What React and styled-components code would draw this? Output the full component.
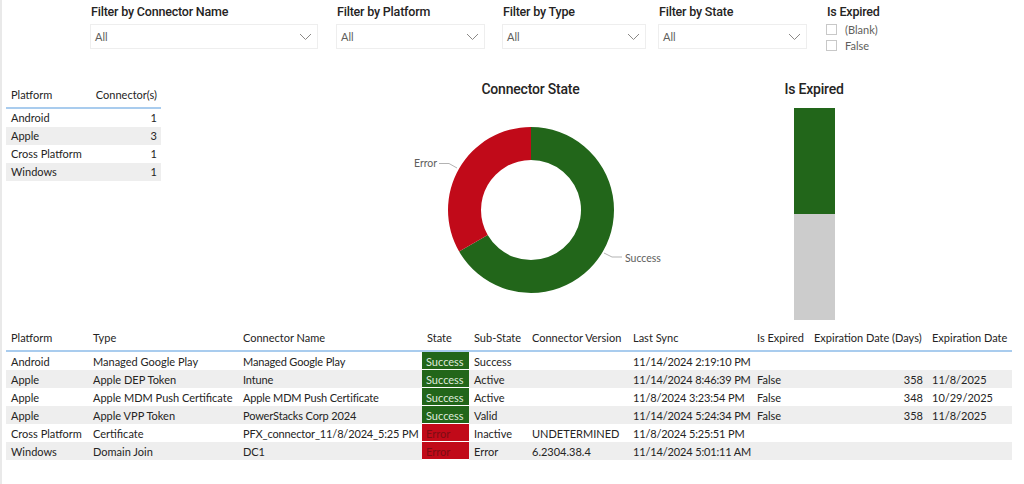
import styled, { createGlobalStyle } from "styled-components";

const GlobalStyle = createGlobalStyle`
  html, body {
    margin: 0;
    padding: 0;
    background: #ffffff;
  }
  body {
    font-family: "Lato", "Liberation Sans", sans-serif;
    color: #252423;
  }
`

const Page = styled.div`
  width: 1024px;
  height: 484px;
  box-sizing: border-box;
  border-left: 2px solid #e9e9e9;
  display: flex;
  flex-direction: column;
  overflow: hidden;
`

const FilterRow = styled.div`
  display: flex;
  height: 60px;
  padding-left: 88px;
  box-sizing: border-box;
`

const Slicer = styled.div`
  width: ${p => p.$width}px;
  margin-right: ${p => p.$space || 0}px;
  display: flex;
  flex-direction: column;
`

const SlicerTitle = styled.div`
  font-family: "Roboto", "Liberation Sans", sans-serif;
  font-weight: 500;
  font-size: 12.5px;
  color: #252423;
  height: 20px;
  line-height: 20px;
  margin-top: 2px;
  padding-left: 1px;
  letter-spacing: -0.2px;
  white-space: nowrap;
`

const Dropdown = styled.div`
  height: 23px;
  margin-top: 2px;
  border: 1px solid #eeeeee;
  display: flex;
  align-items: center;
  justify-content: space-between;
  padding: 0 5px 0 4px;
  font-size: 11px;
  color: #605e5c;
`

const CheckList = styled.div`
  display: flex;
  flex-direction: column;
  gap: 4px;
  margin-top: 1px;
`

const CheckItem = styled.div`
  display: flex;
  align-items: center;
  gap: 8px;
  font-size: 11px;
  color: #605e5c;
  height: 12px;
`

const CheckBox = styled.span`
  width: 9px;
  height: 9px;
  border: 1px solid #c8c8c8;
  display: inline-block;
`

const MiddleRow = styled.div`
  display: flex;
  height: 265px;
`

const SmallTable = styled.div`
  width: 155px;
  margin-left: 4px;
  margin-top: 24px;
  font-size: 11px;
`

const SmallHead = styled.div`
  display: flex;
  justify-content: space-between;
  height: 23px;
  line-height: 21px;
  padding: 0 4px 0 5px;
  border-bottom: 2px solid #a9ccee;
  color: #252423;
`

const SmallRow = styled.div`
  display: flex;
  justify-content: space-between;
  height: 18px;
  line-height: 18px;
  padding: 0 4px 0 5px;
  background: ${p => (p.$alt ? "#eeeeee" : "transparent")};
`

const Visual = styled.div`
  width: ${p => p.$width}px;
  margin-left: ${p => p.$offset}px;
  margin-top: 19px;
  display: flex;
  flex-direction: column;
  align-items: center;
`

const VisualTitle = styled.div`
  font-family: "Roboto", "Liberation Sans", sans-serif;
  font-weight: 500;
  font-size: 14px;
  letter-spacing: -0.2px;
  color: #252423;
  height: 20px;
  line-height: 20px;
`

const Bar = styled.div`
  width: 41px;
  margin-top: 9px;
  display: flex;
  flex-direction: column;
`

const BarPart = styled.div`
  height: ${p => p.$h}px;
  background: ${p => p.$color};
`

const TableWrap = styled.div`
  padding-left: 4px;
`

const Table = styled.table`
  border-collapse: collapse;
  table-layout: fixed;
  width: 1006px;
  font-size: 11px;
`

const HeadCell = styled.th`
  font-weight: 400;
  text-align: left;
  height: 25px;
  padding: 0 0 0 5px;
  border-bottom: 2px solid #a9ccee;
  color: #252423;
  white-space: nowrap;
  overflow: hidden;
`

const Row = styled.tr`
  background: ${p => (p.$alt ? "#eeeeee" : "transparent")};
`

const Cell = styled.td`
  height: 18px;
  padding: 0 ${p => (p.$right ? "4px" : "0")} 0 5px;
  text-align: ${p => (p.$right ? "right" : "left")};
  white-space: nowrap;
  overflow: hidden;
  color: #252423;
  letter-spacing: ${p => (p.$tight ? "-0.15px" : "0")};
`

const StateCell = styled.td`
  height: 18px;
  padding: 0 0 0 4px;
  white-space: nowrap;
  overflow: hidden;
  background: ${p => (p.$ok ? "#22661a" : "#c10a19")};
  color: ${p => (p.$ok ? "#dfe9dc" : "#7d0d14")};
  box-shadow: inset 0 -1px 0 #ffffff;
`

const Chevron = () => (
  <svg width="13" height="8" viewBox="0 0 13 8">
    <path d="M1 1 L6.5 6.5 L12 1" fill="none" stroke="#8a8886" strokeWidth="1" />
  </svg>
)

const filters = [
  { title: "Filter by Connector Name", width: 228, space: 18 },
  { title: "Filter by Platform", width: 149, space: 17 },
  { title: "Filter by Type", width: 144, space: 12 },
  { title: "Filter by State", width: 149, space: 19 },
]

const platforms = [
  ["Android", 1],
  ["Apple", 3],
  ["Cross Platform", 1],
  ["Windows", 1],
]

const cols = [
  ["Platform", 82],
  ["Type", 150],
  ["Connector Name", 184],
  ["State", 47],
  ["Sub-State", 58],
  ["Connector Version", 101],
  ["Last Sync", 124],
  ["Is Expired", 57],
  ["Expiration Date (Days)", 118],
  ["Expiration Date", 85],
]

const connectors = [
  ["Android", "Managed Google Play", "Managed Google Play", "Success", "Success", "", "11/14/2024 2:19:10 PM", "", "", ""],
  ["Apple", "Apple DEP Token", "Intune", "Success", "Active", "", "11/14/2024 8:46:39 PM", "False", "358", "11/8/2025"],
  ["Apple", "Apple MDM Push Certificate", "Apple MDM Push Certificate", "Success", "Active", "", "11/8/2024 3:23:54 PM", "False", "348", "10/29/2025"],
  ["Apple", "Apple VPP Token", "PowerStacks Corp 2024", "Success", "Valid", "", "11/14/2024 5:24:34 PM", "False", "358", "11/8/2025"],
  ["Cross Platform", "Certificate", "PFX_connector_11/8/2024_5:25 PM", "Error", "Inactive", "UNDETERMINED", "11/8/2024 5:25:51 PM", "", "", ""],
  ["Windows", "Domain Join", "DC1", "Error", "Error", "6.2304.38.4", "11/14/2024 5:01:11 AM", "", "", ""],
]

const DonutChart = () => (
  <svg width="281" height="200" viewBox="0 0 281 200">
    <path
      d="M141 28 A83 83 0 1 1 69.12 152.5 L97.7 136 A50 50 0 1 0 141 61 Z"
      fill="#22661a"
    />
    <path
      d="M69.12 152.5 A83 83 0 0 1 141 28 L141 61 A50 50 0 0 0 97.7 136 Z"
      fill="#c10a19"
    />
    <path d="M49 64.5 L59 64.5 L67 69" fill="none" stroke="#b3b3b3" strokeWidth="1" />
    <path d="M214 154 L222 158 L232 158" fill="none" stroke="#b3b3b3" strokeWidth="1" />
    <text x="24" y="68" fontSize="10.5" fill="#605e5c" fontFamily="Lato, sans-serif">Error</text>
    <text x="235" y="162.5" fontSize="10.5" fill="#605e5c" fontFamily="Lato, sans-serif">Success</text>
  </svg>
)

const App = () => {
  return (
    <>
      <GlobalStyle />
      <Page>
        <FilterRow>
          {filters.map(f => (
            <Slicer key={f.title} $width={f.width} $space={f.space}>
              <SlicerTitle>{f.title}</SlicerTitle>
              <Dropdown>
                <span>All</span>
                <Chevron />
              </Dropdown>
            </Slicer>
          ))}
          <Slicer $width={100}>
            <SlicerTitle>Is Expired</SlicerTitle>
            <CheckList>
              <CheckItem><CheckBox />(Blank)</CheckItem>
              <CheckItem><CheckBox />False</CheckItem>
            </CheckList>
          </Slicer>
        </FilterRow>

        <MiddleRow>
          <SmallTable>
            <SmallHead>
              <span>Platform</span>
              <span>Connector(s)</span>
            </SmallHead>
            {platforms.map(([name, count], i) => (
              <SmallRow key={name} $alt={i % 2 === 1}>
                <span>{name}</span>
                <span>{count}</span>
              </SmallRow>
            ))}
          </SmallTable>

          <Visual $width={281} $offset={229}>
            <VisualTitle>Connector State</VisualTitle>
            <DonutChart />
          </Visual>

          <Visual $width={120} $offset={83}>
            <VisualTitle>Is Expired</VisualTitle>
            <Bar>
              <BarPart $h={106} $color="#22661a" />
              <BarPart $h={106} $color="#cccccc" />
            </Bar>
          </Visual>
        </MiddleRow>

        <TableWrap>
          <Table>
            <colgroup>
              {cols.map(([name, w]) => <col key={name} style={{ width: w }} />)}
            </colgroup>
            <thead>
              <tr>
                {cols.map(([name]) => <HeadCell key={name}>{name}</HeadCell>)}
              </tr>
            </thead>
            <tbody>
              {connectors.map((r, i) => (
                <Row key={i} $alt={i % 2 === 1}>
                  <Cell>{r[0]}</Cell>
                  <Cell>{r[1]}</Cell>
                  <Cell $tight>{r[2]}</Cell>
                  <StateCell $ok={r[3] === "Success"}>{r[3]}</StateCell>
                  <Cell>{r[4]}</Cell>
                  <Cell>{r[5]}</Cell>
                  <Cell $tight>{r[6]}</Cell>
                  <Cell>{r[7]}</Cell>
                  <Cell $right>{r[8]}</Cell>
                  <Cell>{r[9]}</Cell>
                </Row>
              ))}
            </tbody>
          </Table>
        </TableWrap>
      </Page>
    </>
  )
}

export default App;
